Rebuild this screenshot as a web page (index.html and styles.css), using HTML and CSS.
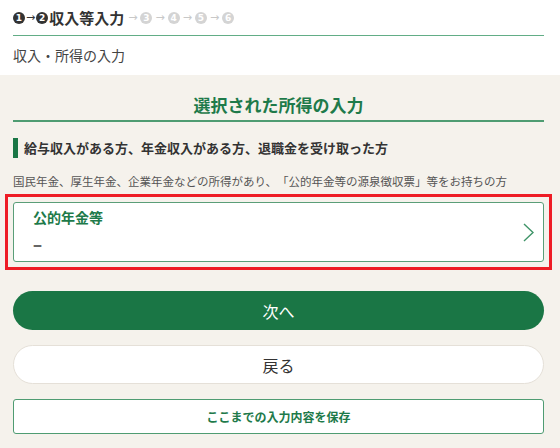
FILE: index.html
```
<!DOCTYPE html>
<html lang="ja">
<head>
    <meta charset="UTF-8">
    <title>収入・所得の入力</title>
    <link rel="stylesheet" href="styles.css">
</head>
<body>

    <!-- Header / Steps -->
    <header class="site-header">
        <div class="steps">
            <span class="step done">1</span>
            <span class="arrow">→</span>
            <span class="step done">2</span>
            <span class="step-name">収入等入力</span>
            <span class="arrow light">→</span>
            <span class="step">3</span>
            <span class="arrow light">→</span>
            <span class="step">4</span>
            <span class="arrow light">→</span>
            <span class="step">5</span>
            <span class="arrow light">→</span>
            <span class="step">6</span>
        </div>
        <p class="page-name">収入・所得の入力</p>
    </header>

    <main class="content">
        <h1 class="title">選択された所得の入力</h1>

        <h2 class="section-head">給与収入がある方、年金収入がある方、退職金を受け取った方</h2>
        <p class="section-desc">国民年金、厚生年金、企業年金などの所得があり、「公的年金等の源泉徴収票」等をお持ちの方</p>

        <!-- Income card -->
        <div class="highlight">
            <a class="income-card" href="#">
                <div class="income-text">
                    <p class="income-name">公的年金等</p>
                    <p class="income-value">–</p>
                </div>
                <svg class="chevron" width="11" height="19" viewBox="0 0 11 19">
                    <path d="M1 1 L10 9.5 L1 18" fill="none" stroke="#3f9468" stroke-width="1.4"/>
                </svg>
            </a>
        </div>

        <button class="btn next-btn">次へ</button>
        <button class="btn back-btn">戻る</button>
        <button class="save-btn">ここまでの入力内容を保存</button>
    </main>

</body>
</html>
```

FILE: styles.css
```
/* General */
body {
    margin: 0;
    font-family: "Noto Sans CJK JP", "Noto Sans", sans-serif;
    background: #f5f2ec;
    color: #333;
    text-spacing-trim: space-all;
}

p, h1, h2 {
    margin: 0;
}

/* Header */
.site-header {
    background: #fff;
    padding: 0 16px 0 13px;
}

.steps {
    display: flex;
    align-items: center;
    height: 35px;
    border-bottom: 1px solid #62ad86;
}

.step {
    display: inline-flex;
    align-items: center;
    justify-content: center;
    flex: none;
    width: 12px;
    height: 12px;
    border-radius: 50%;
    background: #d4d4d4;
    color: #fff;
    font-family: "DejaVu Sans", sans-serif;
    font-size: 9px;
    font-weight: bold;
}

.step.done {
    background: #333;
}

.arrow {
    font-family: "DejaVu Sans", sans-serif;
    font-size: 11px;
    color: #333;
    margin: 0 1px;
}

.arrow.light {
    color: #c8c8c8;
    margin: 0 3px;
}

.step-name {
    font-size: 15px;
    font-weight: bold;
    color: #333;
    margin-left: 1px;
    margin-right: 1px;
}

.page-name {
    font-size: 14px;
    line-height: 39px;
    color: #444;
}

/* Content */
.content {
    padding: 18px 16px 20px 13px;
}

.title {
    font-size: 17px;
    line-height: 24px;
    font-weight: bold;
    color: #1e7a4a;
    text-align: center;
    padding-bottom: 3px;
    border-bottom: 2px solid #4f9c72;
}

.section-head {
    margin-top: 16px;
    font-size: 13px;
    line-height: 20px;
    font-weight: bold;
    color: #333;
    border-left: 5px solid #1a7645;
    padding-left: 6px;
}

.section-desc {
    margin-top: 14px;
    font-size: 11.5px;
    line-height: 18px;
    color: #555;
}

.highlight {
    margin: 4px -8px 0;
    border: 3px solid #ee1c25;
    padding: 5px;
}

.income-card {
    display: flex;
    align-items: center;
    background: #fff;
    border: 1px solid #5a9e78;
    border-radius: 3px;
    padding: 4px 9px 7px 19px;
    text-decoration: none;
}

.income-text {
    flex: 1;
}

.income-name {
    font-size: 14px;
    line-height: 20px;
    font-weight: bold;
    color: #1e7a4a;
}

.income-value {
    margin-top: 7px;
    font-family: "Noto Sans", sans-serif;
    font-size: 18px;
    line-height: 20px;
    font-weight: bold;
    color: #666;
}

.chevron {
    margin-top: 3px;
}

/* Buttons */
.btn {
    display: block;
    width: 100%;
    height: 39px;
    border-radius: 20px;
    font-family: inherit;
    font-size: 16px;
    cursor: pointer;
}

.next-btn {
    margin-top: 21px;
    background: #1a7645;
    border: none;
    color: #fff;
}

.back-btn {
    margin-top: 15px;
    background: #fff;
    border: 1px solid #e5e0d8;
    color: #333;
}

.save-btn {
    display: block;
    width: 100%;
    height: 35px;
    margin-top: 15px;
    background: #fff;
    border: 1px solid #4f9c72;
    border-radius: 3px;
    font-family: inherit;
    font-size: 12px;
    font-weight: bold;
    color: #1e7a4a;
    cursor: pointer;
}
```
